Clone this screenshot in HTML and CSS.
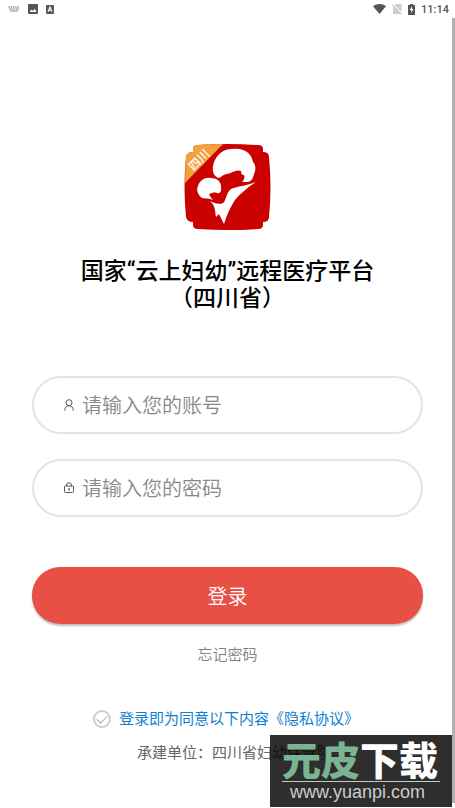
FILE: index.html
```html
<!DOCTYPE html>
<html lang="zh-CN">
<head>
    <meta charset="utf-8">
    <meta name="viewport" content="width=device-width, initial-scale=1">
    <title>登录</title>
    <link rel="stylesheet" href="styles.css">
</head>
<body>
    <header class="status-bar">
        <div class="status-group">
            <svg width="12" height="8" viewBox="0 0 12 8" fill="none" stroke="#999">
                <path d="M.5 2h11M1 4h10" stroke-dasharray="1.5 .7" stroke-width="1.3"/>
                <path d="M2 6h8" stroke-width="1.2"/>
            </svg>
            <svg width="10" height="10" viewBox="0 0 10 10">
                <rect width="10" height="10" rx="1" fill="#555"/>
                <path d="M1.5 8l2-2.6L5 7l1.6-2.2L8.7 8z" fill="#fff"/>
            </svg>
            <svg width="8" height="9" viewBox="0 0 8 9">
                <rect width="8" height="9" rx="1" fill="#555"/>
                <path d="M2 6.8L4 2l2 4.8M2.8 5.3h2.4" fill="none" stroke="#fff" stroke-width="1.1"/>
            </svg>
        </div>
        <div class="status-group status-right">
            <svg width="13" height="10" viewBox="0 0 13 10">
                <path d="M0 2.2C3.8-.7 9.2-.7 13 2.2L6.5 10z" fill="#555"/>
            </svg>
            <svg width="10" height="10" viewBox="0 0 10 10">
                <path d="M4 0h5.5v10H1V3z" fill="#ccc"/>
                <path d="M0 0l10 10" stroke="#fff" stroke-width="2"/>
                <path d="M.3 1l9 9" stroke="#aaa"/>
            </svg>
            <svg width="7" height="11" viewBox="0 0 7 11">
                <path d="M2 0h3v1h2v10H0V1h2z" fill="#555"/>
                <path d="M4 2.3L1.6 6h1.6v3L5.5 5H4z" fill="#fff"/>
            </svg>
            <span class="clock">11:14</span>
        </div>
    </header>

    <main class="login-page">
        <svg class="logo" width="87" height="88" viewBox="0 0 87 88">
            <path d="M9 6Q9 2 14 2Q43 0 74 2Q79 2 79 6V9Q85 9 85 14Q88 44 85 74Q85 79 79 79V82Q79 86 74 86Q43 88 14 86Q9 86 9 82V79Q3 79 2 74Q-1 44 2 14Q3 9 9 9Z" fill="#cb0000"/>
            <path d="M9 9Q3 9 2 14Q1 27 1 40L39 1Q24 1 14 2Q9 2 9 6Z" fill="#f2a13e"/>
            <text class="logo-text" x="18" y="20" transform="rotate(-45 18 20)" text-anchor="middle">四川</text>
            <path d="M34 35C30 33 28 28 29 23C31 13 38 6 48 6C55 5 60 7 63 9C67 12 68 15 69 19C72 22 72 27 70 31C69 35 68 38 64 39L58 39C60 37 61 35 60 32C58 32 57 31 57 28C52 26 48 30 43 31C39 31 37 35 34 35Z" fill="#fff"/>
            <path d="M29 57C25 55 22 56 18 55C14 52 12 47 14 43C16 37 21 34 27 35C33 35 38 39 37 45C38 49 35 51 33 50C30 49 28 50 25 51Q26 54 29 57Z" fill="#fff"/>
            <path d="M26 58C30 60 35 62 39 60C42 58 42 50 47 46C54 43 62 43 72 39C64 44 56 51 51 57C47 63 43 71 40 81L35 71L32 74C31 70 32 63 26 58Z" fill="#fff"/>
        </svg>

        <h1 class="title">国家“云上妇幼”远程医疗平台<br>（四川省）</h1>

        <form class="login-form">
            <label class="field">
                <svg width="10" height="12" viewBox="0 0 10 12" fill="none" stroke="#555" stroke-width="1">
                    <circle cx="5" cy="3.7" r="3"/>
                    <path d="M.7 11.5C.7 8.5 2.5 6.7 5 6.7S9.3 8.5 9.3 11.5"/>
                </svg>
                <input type="text" name="account" placeholder="请输入您的账号" aria-label="账号">
            </label>
            <label class="field">
                <svg width="10" height="12" viewBox="0 0 10 12" fill="none" stroke="#555" stroke-width="1">
                    <rect x=".5" y="4" width="9" height="6.5" rx="1"/>
                    <path d="M2.5 4V3a2.5 2.2 0 0 1 5 0v1M5 6.5v2.3M4.2 6.8h1.6"/>
                </svg>
                <input type="password" name="password" placeholder="请输入您的密码" aria-label="密码">
            </label>
            <button type="button" class="login-button">登录</button>
            <a class="forgot" href="#">忘记密码</a>
            <div class="agreement">
                <input type="checkbox" id="agree" class="agree-box">
                <label for="agree">登录即为同意以下内容</label><a href="#">《隐私协议》</a>
            </div>
        </form>

        <p class="builder">承建单位：四川省妇幼保健院</p>
    </main>

    <div class="scroll-thumb"></div>

    <div class="watermark">
        <div class="watermark-name"><span>元皮</span>下载</div>
        <div class="watermark-url">www.yuanpi.com</div>
    </div>
</body>
</html>
```
FILE: styles.css
```css
* {
    box-sizing: border-box;
}

body {
    margin: 0;
    min-height: 100vh;
    position: relative;
    background: #fff;
    color: #666;
    font-family: Roboto, "Noto Sans CJK SC", sans-serif;
}

.status-bar {
    display: flex;
    justify-content: space-between;
    align-items: center;
    height: 18px;
    padding: 0 6px 0 8px;
}

.status-group {
    display: flex;
    align-items: center;
    gap: 8px;
}

.status-right {
    gap: 6px;
}

.clock {
    color: #555;
    font-size: 11px;
    font-weight: 500;
}

.login-page {
    display: flex;
    flex-direction: column;
    align-items: center;
    padding: 125px 32px 0;
}

.logo-text {
    fill: #fff;
    font-size: 12px;
    font-weight: 500;
}

.title {
    margin: 27px 0 0;
    color: #000;
    font-size: 23px;
    line-height: 27px;
    font-weight: 500;
    text-align: center;
}

.login-form {
    display: flex;
    flex-direction: column;
    align-items: center;
    width: 100%;
    margin-top: 64px;
}

.field {
    display: flex;
    align-items: center;
    gap: 8px;
    width: 100%;
    height: 58px;
    margin-bottom: 25px;
    padding: 0 30px;
    border: 2px solid #e4e4e4;
    border-radius: 29px;
}

.field input {
    flex: 1;
    min-width: 0;
    padding: 0;
    border: 0;
    outline: 0;
    background: none;
    color: #333;
    font: 350 20px/30px "Noto Sans CJK SC", sans-serif;
}

.field input::placeholder {
    color: #888;
}

.login-button {
    width: 100%;
    height: 57px;
    margin-top: 25px;
    padding: 0;
    border: 0;
    border-radius: 28px;
    background: #e85046;
    box-shadow: 0 2px 2px rgba(0, 0, 0, 0.25);
    color: #fff;
    font: 350 20px/30px "Noto Sans CJK SC", sans-serif;
}

.forgot {
    margin-top: 18px;
    color: #808080;
    font: 350 15px/24px "Noto Sans CJK SC", sans-serif;
    text-decoration: none;
}

.agreement {
    display: flex;
    align-items: center;
    margin-top: 41px;
    color: #0f80d0;
    font-size: 15px;
    line-height: 24px;
}

.agreement a {
    color: inherit;
    text-decoration: none;
}

.agree-box {
    appearance: none;
    display: flex;
    align-items: center;
    justify-content: center;
    width: 18px;
    height: 18px;
    margin: 0 8px 0 -3px;
    border: 2px solid #ccc;
    border-radius: 50%;
}

.agree-box::before {
    content: "";
    width: 9px;
    height: 5px;
    margin-bottom: 3px;
    border: solid #aaa;
    border-width: 0 0 1px 1px;
    transform: rotate(-45deg);
}

.builder {
    margin: 10px 0 0;
    padding-left: 14px;
    font-size: 15px;
    line-height: 24px;
}

.scroll-thumb {
    position: absolute;
    top: 18px;
    right: 0;
    bottom: 5px;
    width: 3px;
    background: #b0b0b0;
}

.watermark {
    position: absolute;
    right: 3px;
    bottom: 1px;
    width: 182px;
    height: 72px;
    padding: 8px 12px 0;
    background: rgba(0, 0, 0, 0.82);
}

.watermark-name {
    height: 39px;
    border-bottom: 1px solid #b9cfc1;
    color: #fff;
    font-size: 39px;
    line-height: 38px;
    font-weight: 900;
    white-space: nowrap;
}

.watermark-name span {
    color: #7ab493;
}

.watermark-url {
    padding-left: 8px;
    color: #ccc;
    font: 18px/20px "Liberation Sans", sans-serif;
}
```
